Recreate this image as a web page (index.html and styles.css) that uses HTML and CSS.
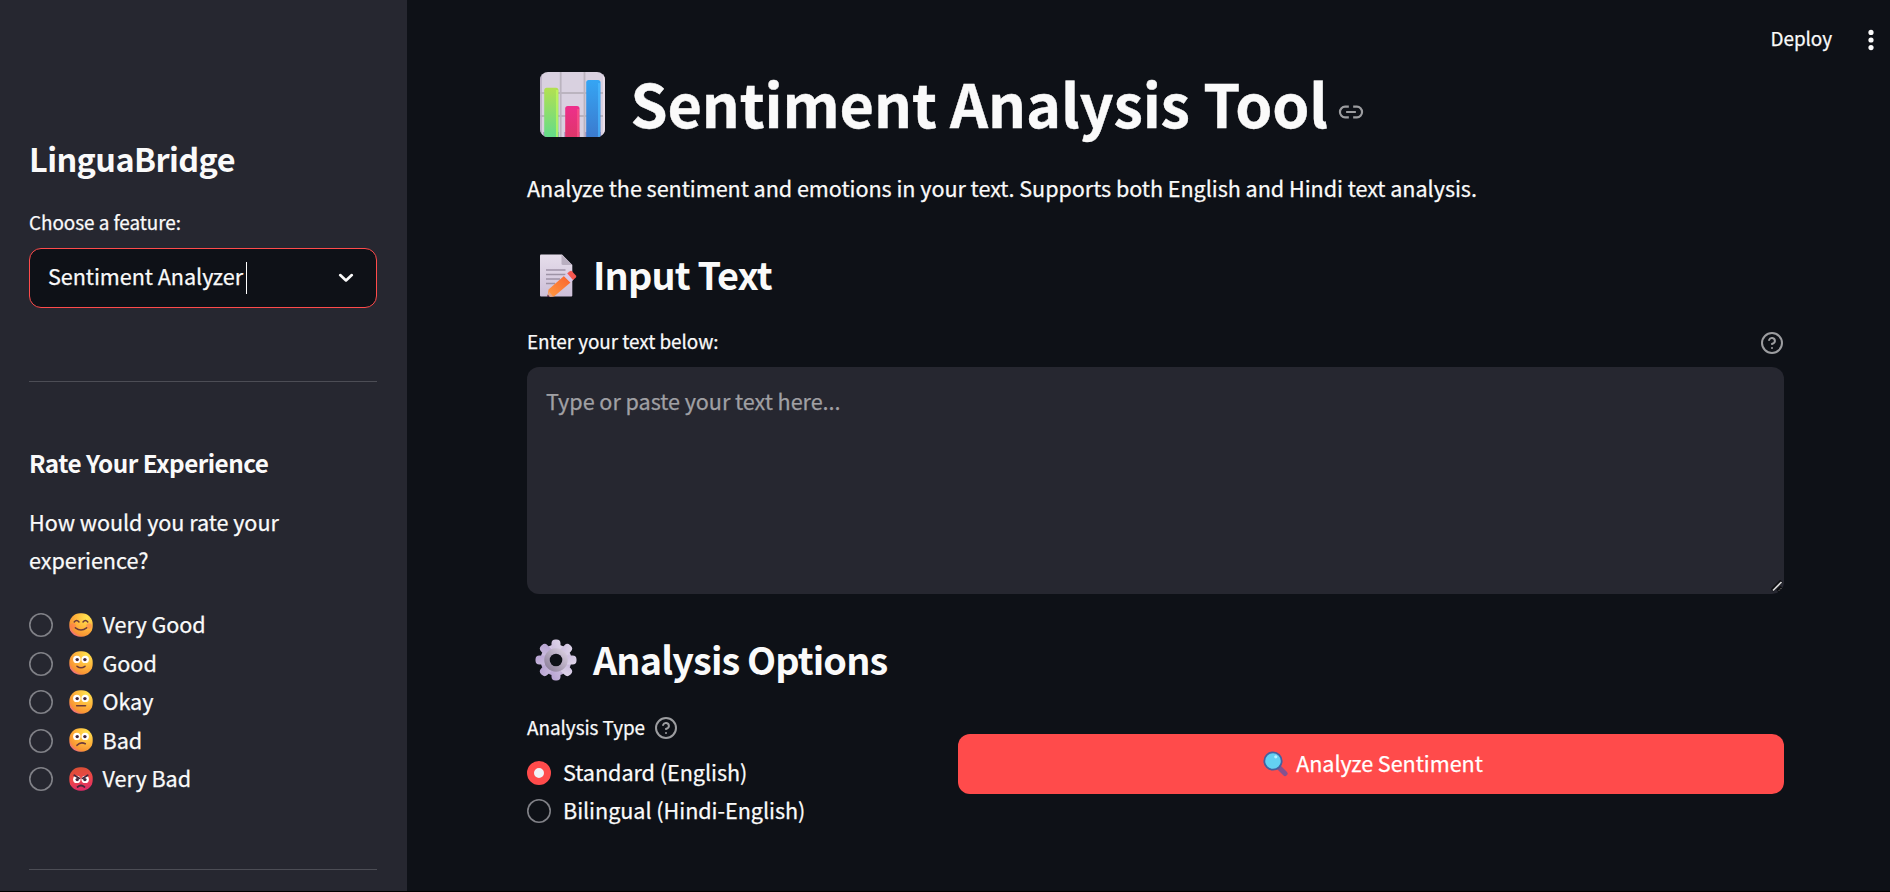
FILE: index.html
```html
<!DOCTYPE html>
<html lang="en">
<head>
<meta charset="utf-8">
<title>LinguaBridge</title>
<link rel="stylesheet" href="styles.css">
</head>
<body>
<svg class="defs" width="0" height="0" aria-hidden="true">
  <defs>
    <radialGradient id="face" cx="0.75" cy="0.2" r="0.95"><stop offset="0" stop-color="#ffe44f"/><stop offset="0.5" stop-color="#ffb53c"/><stop offset="0.82" stop-color="#f89434"/><stop offset="1" stop-color="#ee5fa0"/></radialGradient>
    <linearGradient id="angry" x1="0.4" y1="0" x2="0.6" y2="1"><stop offset="0" stop-color="#d94f35"/><stop offset="0.5" stop-color="#ee4648"/><stop offset="1" stop-color="#dc2a68"/></linearGradient>
    <linearGradient id="green" x1="0" y1="0" x2="0" y2="1"><stop offset="0" stop-color="#b3e051"/><stop offset="1" stop-color="#5fdb8d"/></linearGradient>
    <linearGradient id="pink" x1="0" y1="0" x2="0" y2="1"><stop offset="0" stop-color="#ee2f8c"/><stop offset="1" stop-color="#dd3767"/></linearGradient>
    <linearGradient id="blue" x1="0" y1="0" x2="0" y2="1"><stop offset="0" stop-color="#35a5f4"/><stop offset="1" stop-color="#3c78cc"/></linearGradient>
    <linearGradient id="paper" x1="0" y1="0" x2="0" y2="1"><stop offset="0" stop-color="#e6deeb"/><stop offset="1" stop-color="#cdbfd8"/></linearGradient>
    <linearGradient id="gear" x1="0.7" y1="0" x2="0.3" y2="1"><stop offset="0" stop-color="#dcd2e8"/><stop offset="1" stop-color="#b9a5d3"/></linearGradient>
    <linearGradient id="hub" x1="1" y1="0" x2="0" y2="1"><stop offset="0" stop-color="#d5cbdd"/><stop offset="1" stop-color="#8f829c"/></linearGradient>
    <linearGradient id="pencil" x1="0" y1="1" x2="1" y2="0"><stop offset="0" stop-color="#ff9b42"/><stop offset="1" stop-color="#f9622f"/></linearGradient>
    <g id="eyes"><circle cx="7.8" cy="8.4" r="3.7" fill="#fff"/><circle cx="16.2" cy="8.4" r="3.7" fill="#fff"/><circle cx="8.2" cy="8.6" r="1.7" fill="#45283c"/><circle cx="15.9" cy="8.6" r="1.7" fill="#45283c"/></g>
    <g id="help" fill="none" stroke="currentColor" stroke-width="2" stroke-linecap="round" stroke-linejoin="round"><circle cx="12" cy="12" r="10"/><path d="M9.09 9a3 3 0 0 1 5.83 1c0 2-3 3-3 3"/><path d="M12 17h.01"/></g>
  </defs>
</svg>
<div class="app">
  <aside class="sidebar">
    <h2 class="brand">LinguaBridge</h2>
    <label class="label feature-label">Choose a feature:</label>
    <div class="select">
      <span class="select-value">Sentiment Analyzer</span><span class="caret"></span>
      <svg class="chevron" width="16" height="10" viewBox="0 0 16 10"><path d="M2.2 2.1 8 7.4l5.8-5.3" fill="none" stroke="#fafafa" stroke-width="2.7" stroke-linecap="round" stroke-linejoin="round"/></svg>
    </div>
    <hr class="rule rule-first">
    <h3 class="rate-title">Rate Your Experience</h3>
    <p class="rate-question">How would you rate your experience?</p>
    <div class="ratings">
      <div class="radio"><span class="dot"></span><svg class="emoji" viewBox="0 0 24 24"><rect x=".3" y=".3" width="23.4" height="23.4" rx="10.8" fill="url(#face)"/><circle cx="4" cy="13" r="2.8" fill="#ff7455" opacity=".5"/><circle cx="20" cy="13" r="2.8" fill="#ff7455" opacity=".5"/><path d="M5.2 9q2.400-3.200 4.800 0M14 9q2.400-3.200 4.800 0M6.400 14.800q5.600 4.200 11.200 0" fill="none" stroke="#6b3a3c" stroke-width="1.5" stroke-linecap="round"/></svg><span>Very Good</span></div>
      <div class="radio"><span class="dot"></span><svg class="emoji" viewBox="0 0 24 24"><rect x=".3" y=".3" width="23.4" height="23.4" rx="10.8" fill="url(#face)"/><use href="#eyes"/><path d="M8 15.3q4 3 8 0" fill="none" stroke="#6b3a3c" stroke-width="1.5" stroke-linecap="round"/></svg><span>Good</span></div>
      <div class="radio"><span class="dot"></span><svg class="emoji" viewBox="0 0 24 24"><rect x=".3" y=".3" width="23.4" height="23.4" rx="10.8" fill="url(#face)"/><use href="#eyes"/><path d="M7.700 15.800h8.800" fill="none" stroke="#6b3a3c" stroke-width="1.6" stroke-linecap="round"/></svg><span>Okay</span></div>
      <div class="radio"><span class="dot"></span><svg class="emoji" viewBox="0 0 24 24"><rect x=".3" y=".3" width="23.4" height="23.4" rx="10.8" fill="url(#face)"/><use href="#eyes"/><path d="M8 17.300q3.500-3.800 8.300-1.600" fill="none" stroke="#6b3a3c" stroke-width="1.6" stroke-linecap="round"/></svg><span>Bad</span></div>
      <div class="radio"><span class="dot"></span><svg class="emoji" viewBox="0 0 24 24"><rect x=".3" y=".3" width="23.4" height="23.4" rx="10.8" fill="url(#angry)"/><g transform="translate(0 4)"><use href="#eyes"/></g><path d="M5.300 8.200l5.200 3.200M18.700 8.200l-5.200 3.200" stroke="#45283c" stroke-width="1.8" stroke-linecap="round"/><path d="M8.500 20q3.500-3 7 0" fill="none" stroke="#45283c" stroke-width="1.7" stroke-linecap="round"/></svg><span>Very Bad</span></div>
    </div>
    <hr class="rule rule-last">
  </aside>

  <main class="main">
    <header class="toolbar">
      <span class="deploy">Deploy</span>
      <svg class="kebab" width="6" height="22" viewBox="0 0 6 22" fill="#fafafa"><circle cx="3" cy="3.4" r="2.6"/><circle cx="3" cy="11" r="2.6"/><circle cx="3" cy="18.600" r="2.6"/></svg>
    </header>

    <div class="content">
      <h1 class="title">
        <svg class="chart" width="65" height="65" viewBox="0 0 65 65">
          <clipPath id="tile"><rect width="65" height="65" rx="8"/></clipPath>
          <g clip-path="url(#tile)">
            <rect width="65" height="65" fill="#d9d1e0"/>
            <path d="M20.700 0v65M44.500 0v65M0 21h65M0 44h65" stroke="#bbb4bf" stroke-width="1.8"/>
            <path d="M1 0v65" stroke="#b9acc4" stroke-width="1.6"/>
            <path d="M64 0v65" stroke="#eadfea" stroke-width="2"/>
            <path d="M3 60h16v5H3zM24 60h16v5H24zM45 60h16v5H45z" fill="#9c80b8" opacity=".6"/>
            <rect x="4.2" y="15.7" width="14.3" height="52" rx="2.5" fill="url(#green)"/><path d="M17 18v47" stroke="#c3f95f" stroke-width="2" opacity=".7"/>
            <rect x="25.2" y="34" width="14.3" height="34" rx="2.5" fill="url(#pink)"/><path d="M38 37v28" stroke="#fb5588" stroke-width="2" opacity=".7"/>
            <rect x="46.2" y="8" width="14.3" height="60" rx="2.5" fill="url(#blue)"/><path d="M59 11v54" stroke="#49b9ff" stroke-width="2" opacity=".7"/>
          </g>
        </svg>
        <span>Sentiment Analysis Tool</span>
        <svg class="link" width="26" height="26" viewBox="0 0 24 24" fill="none" stroke="#9c9da0" stroke-width="2"><path d="M14 7h3.500a4.700 5 0 0 1 0 10H14M10 17H6.500a4.700 5 0 0 1 0-10H10M7.500 12h9"/></svg>
      </h1>
      <p class="intro">Analyze the sentiment and emotions in your text. Supports both English and Hindi text analysis.</p>

      <h2 class="heading heading-input">
        <svg class="memo" width="37" height="43" viewBox="0 0 37 43">
          <path d="M0 1.500Q0 .5 1 .5h21L32.300 11v30.500q0 1-1 1H1q-1 0-1-1z" fill="url(#paper)"/>
          <path d="M21.500.7 32.300 11H23q-1.500 0-1.500-1.500z" fill="#b9afc0"/>
          <path d="M6 16h19.500M6 20.600h19.500M6 25h14M6 29.500h9" stroke="#9e93a6" stroke-width="1.500"/>
          <path d="M7.500 42.500 8.500 35.500 24 22 30.500 28.500 14 42.500z" fill="url(#pencil)"/>
          <path d="M7.200 43 9 37.500 13 42.500z" fill="#e2a68e"/><path d="M7 43l.8-2.500 2 2.500z" fill="#4d294c"/>
          <path d="M24 22l3.700-3.200 6 6.700-3.200 3z" fill="#d9c9e8"/>
          <path d="M27.200 19.200l2.800-2q1.200-.8 2.200.2l3.700 4q1 1.300-.2 2.300l-2.700 2.200z" fill="#f6574f"/>
        </svg>
        <span>Input Text</span>
      </h2>
      <div class="label-row">
        <span class="label">Enter your text below:</span>
        <svg class="help" width="24" height="24" viewBox="0 0 24 24"><use href="#help"/></svg>
      </div>
      <div class="textarea">
        <span class="placeholder">Type or paste your text here...</span>
        <svg class="grip" width="12" height="12" viewBox="0 0 12 12"><path d="M1 10.500 10.500 1M6.500 11l4-4" stroke="#0c0d10" stroke-width="3.600"/><path d="M2 10.500 10.500 2" stroke="#d6d6d6" stroke-width="1.700"/><path d="M8 10.500l2.500-2.500" stroke="#aaa" stroke-width="1" stroke-dasharray="1 1.300"/></svg>
      </div>

      <h2 class="heading heading-options">
        <svg class="gear" width="42" height="42" viewBox="-21 -21 42 42">
          <g fill="url(#gear)">
            <circle r="15.500"/>
            <rect x="-4.500" y="-20.500" width="9" height="41" rx="4"/>
            <rect x="-4.500" y="-20.500" width="9" height="41" rx="4" transform="rotate(45)"/>
            <rect x="-4.500" y="-20.500" width="9" height="41" rx="4" transform="rotate(90)"/>
            <rect x="-4.500" y="-20.500" width="9" height="41" rx="4" transform="rotate(135)"/>
          </g>
          <circle r="9" fill="none" stroke="url(#hub)" stroke-width="5.500"/>
          <circle r="6.300" fill="#0e1117"/>
        </svg>
        <span>Analysis Options</span>
      </h2>
      <div class="options">
        <section class="type">
          <div class="type-label"><span class="label">Analysis Type</span><svg class="help" width="24" height="24" viewBox="0 0 24 24"><use href="#help"/></svg></div>
          <div class="radio"><span class="dot dot-on"></span><span>Standard (English)</span></div>
          <div class="radio"><span class="dot"></span><span>Bilingual (Hindi-English)</span></div>
        </section>
        <button class="analyze">
          <svg class="lens" width="25" height="26" viewBox="0 0 25 26"><path d="M16 16.500l6 6" stroke="#84528f" stroke-width="5" stroke-linecap="round"/><circle cx="10" cy="10" r="8.700" fill="#64d0f2" stroke="#45609f" stroke-width="1.800"/><circle cx="12.800" cy="5.800" r="1.600" fill="#b9f1ff"/></svg>
          <span>Analyze Sentiment</span>
        </button>
      </div>
    </div>
  </main>
</div>
</body>
</html>
```
FILE: styles.css
```css
* { box-sizing: border-box; }

body {
  margin: 0;
  background: #0e1117;
  color: #fafafa;
  font-family: "Noto Sans CJK SC", "Open Sans", sans-serif;
  font-size: 21.6px;
  line-height: 38px;
  letter-spacing: -0.045px;
  -webkit-text-stroke: 0.25px;
}

h1, h2, h3, p { margin: 0; }
h2, h3 { -webkit-text-stroke: 0; }
svg { display: block; flex: none; }
.defs { position: absolute; }

.app {
  display: flex;
  height: 892px;
  overflow: hidden;
  border-bottom: 1px solid #000;
}

/* Sidebar */
.sidebar {
  width: 407px;
  flex: none;
  padding: 136px 30px 0 29px;
  background: #262730;
}

.brand { font-size: 32.4px; line-height: 44px; font-weight: 700; letter-spacing: -0.58px; white-space: nowrap; }
.label { font-size: 18.9px; line-height: 30px; white-space: nowrap; }
.feature-label { display: block; margin-top: 27px; }

.select {
  display: flex;
  align-items: center;
  height: 60px;
  margin-top: 11px;
  padding: 0 22px 0 18px;
  border: 1px solid #ff4b4b;
  border-radius: 12px;
  background: #0e1117;
}
.select-value { padding-bottom: 4px; white-space: nowrap; }
.caret { width: 1px; height: 32px; margin-left: 3px; background: #fff; }
.chevron { margin-left: auto; }

.rule { height: 1px; margin: 0; border: 0; background: #4c4d55; }
.rule-first { margin-top: 73px; }
.rule-last { margin-top: 71px; }

.rate-title { margin-top: 65px; font-size: 24.3px; line-height: 32px; font-weight: 700; letter-spacing: -0.55px; white-space: nowrap; }
.rate-question { margin-top: 24px; line-height: 38.4px; }

.ratings { margin-top: 26px; }
.radio { display: flex; align-items: center; height: 38px; line-height: 35px; white-space: nowrap; }
.ratings .radio { height: 38.5px; }
.radio span:last-child { padding-bottom: 3px; }
.dot {
  width: 24px;
  height: 24px;
  flex: none;
  margin-right: 12px;
  border-radius: 50%;
  box-shadow: inset 0 0 0 1.6px #808187;
}
.dot-on { border: 7.500px solid #ff4b4b; background: #f0f2f6; box-shadow: none; }
.emoji { width: 24px; height: 24px; margin: 0 9.5px 1px 2px; }
.ratings .dot { margin-right: 14px; }

/* Main column */
.main { flex: 1; padding: 0 16px 0 120px; }

.toolbar {
  display: flex;
  align-items: flex-start;
  justify-content: flex-end;
  gap: 36px;
  height: 62px;
  padding-top: 18px;
}
.deploy { font-size: 18.9px; line-height: 40px; }
.kebab { margin-top: 11px; }

.content { width: 1257px; }

.title {
  display: flex;
  align-items: center;
  height: 80px;
  padding-left: 13px;
  font-size: 59.4px;
  line-height: 80px;
  font-weight: 700;
  letter-spacing: -0.14px;
  white-space: nowrap;
  -webkit-text-stroke: 0.4px;
}
.chart { margin-right: 25.5px; margin-bottom: -5px; }
.link { margin: 20px 0 0 10px; }

.intro { margin-top: 27px; white-space: nowrap; }

.heading { display: flex; align-items: center; height: 50px; font-size: 37.8px; line-height: 50px; font-weight: 700; letter-spacing: -0.87px; white-space: nowrap; }
.heading-input { margin-top: 42px; padding-left: 13px; }
.memo { margin: 2px 16px 0 0; }
.heading-options { margin-top: 40px; padding-left: 8px; }
.gear { margin: 2px 16px 0 0; }

.label-row { display: flex; justify-content: space-between; height: 30px; margin-top: 27px; }
.help { color: #9c9da0; }
.label-row .help { margin-top: 5px; }

.textarea {
  position: relative;
  height: 227px;
  margin-top: 11px;
  padding: 15px 19px;
  border-radius: 12px;
  background: #262730;
}
.placeholder { color: #a0a0a4; white-space: nowrap; }
.grip { position: absolute; right: 1px; bottom: 2px; }

.options { display: flex; justify-content: space-between; margin-top: 28px; }
.type-label { display: flex; gap: 9px; height: 30px; margin-bottom: 12px; }
.type-label .help { margin-top: 4px; }

.analyze {
  display: flex;
  align-items: center;
  justify-content: center;
  width: 826px;
  height: 60px;
  margin-top: 22px;
  padding: 0 0 2px 4px;
  border: 0;
  border-radius: 12px;
  background: #ff4b4b;
  color: #fff;
  font: inherit;
  line-height: 40px;
  letter-spacing: inherit;
}
.lens { margin-right: 8px; margin-top: 2px; }
```
